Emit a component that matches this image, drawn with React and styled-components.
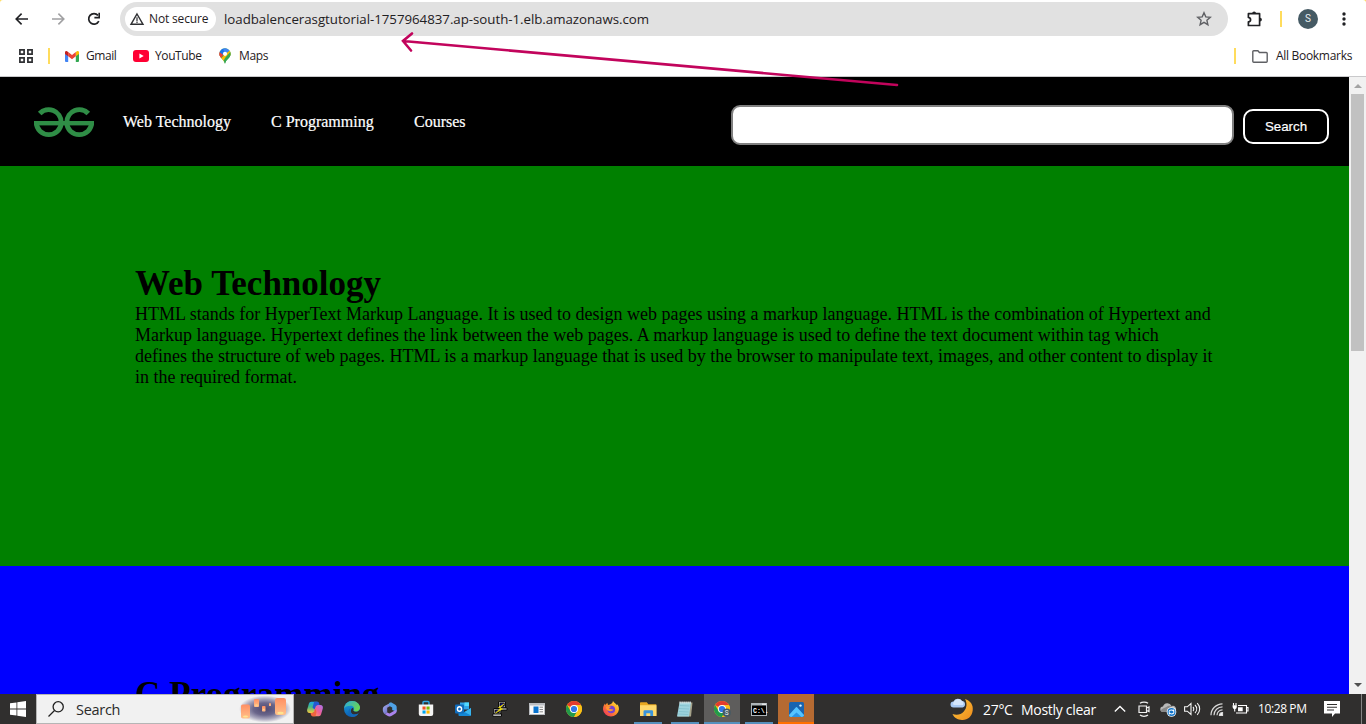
import React from 'react';
import styled, { createGlobalStyle } from 'styled-components';

const Global = createGlobalStyle`
  * { box-sizing: border-box; }
  html, body { margin: 0; padding: 0; overflow: hidden; }
  svg { display: block; flex: none; overflow: visible; }
`;

const Screen = styled.div`
  position: relative;
  width: 1366px;
  height: 724px;
  display: flex;
  flex-direction: column;
  overflow: hidden;
  background: #fff;
  font-family: 'Open Sans', 'Noto Sans', sans-serif;
`;

const Label = styled.span`
  flex: none;
  white-space: nowrap;
  font-size: ${(p) => p.$size || 12}px;
  font-weight: ${(p) => p.$weight || 400};
  letter-spacing: ${(p) => p.$track || 0}px;
  width: ${(p) => (p.$w ? `${p.$w}px` : 'auto')};
  padding-top: ${(p) => p.$drop || 0}px;
  margin-left: ${(p) => p.$ml || 0}px;
  color: ${(p) => p.$color || '#1f2023'};
  line-height: 18px;
`;

/* Browser chrome */
const ChromeFrame = styled.div`
  height: 77px;
  flex: none;
  background: #ffdc5c;
`;
const ChromeSurface = styled.div`
  height: 77px;
  background: #fff;
  border-bottom: 1px solid #c9c9cb;
  border-radius: 3px 3px 0 0;
`;
const Toolbar = styled.div`
  height: 38px;
  display: flex;
  align-items: center;
  padding-left: 4px;
`;
const ToolCell = styled.div`
  width: 36px;
  height: 34px;
  flex: none;
  display: flex;
  align-items: center;
  justify-content: center;
`;
const AddressBar = styled.div`
  width: 1108px;
  height: 34px;
  margin: 0 8px;
  padding: 0 16px 0 5px;
  border-radius: 17px;
  background: #e1e1e1;
  display: flex;
  align-items: center;
`;
const SecurityChip = styled.div`
  width: 91px;
  height: 24px;
  border-radius: 12px;
  background: #fff;
  display: flex;
  align-items: center;
  padding-left: 5px;
  gap: 5px;
  margin-right: 8px;
`;
const Spacer = styled.div`flex: 1;`;
const Divider = styled.div`
  width: 2px;
  height: 16px;
  flex: none;
  margin: ${(p) => p.$m || '0'};
  background: #ffdc5c;
`;
const Avatar = styled.div`
  width: 20px;
  height: 20px;
  border-radius: 50%;
  background: #455a64;
  color: #e8eef1;
  font: 10px/20px Roboto, sans-serif;
  text-align: center;
`;
const Bookmarks = styled.div`
  height: 36px;
  display: flex;
  align-items: center;
  padding: 0 14px 0 19px;
`;
const Bookmark = styled.div`
  display: flex;
  align-items: center;
  gap: ${(p) => p.$gap}px;
  width: ${(p) => p.$w}px;
`;

/* Web page */
const Viewport = styled.div`
  height: 617px;
  flex: none;
  display: flex;
`;
const Page = styled.main`
  width: 1349px;
  height: 617px;
  overflow: hidden;
  font-family: 'Liberation Serif', serif;
`;
const Nav = styled.nav`
  height: 89px;
  background: #000;
  display: flex;
  align-items: center;
  padding: 0 20px 0 34px;
`;
const NavLinks = styled.div`
  display: flex;
  gap: 40px;
  margin: 1px 0 0 29px;
`;
const NavLink = styled.a`
  color: #fff;
  font-size: 16px;
  line-height: 18px;
  width: ${(p) => p.$w}px;
  white-space: nowrap;
  -webkit-text-stroke: 0.2px #fff;
`;
const SearchInput = styled.div`
  width: 503px;
  height: 40px;
  margin: 7px 9px 0 0;
  background: #fff;
  border: 2px solid #808080;
  border-radius: 9px;
`;
const SearchButton = styled.button`
  width: 86px;
  height: 35px;
  margin: 10px 0 0;
  padding: 0;
  background: #000;
  color: #fff;
  border: 2px solid #fff;
  border-radius: 10px;
  font: 13.33px 'Liberation Sans', sans-serif;
  -webkit-text-stroke: 0.2px #fff;
`;
const Section = styled.section`
  height: 400px;
  background: ${(p) => p.$bg};
  padding: ${(p) => p.$top}px 135px 0;
`;
const Heading = styled.h1`
  margin: 0;
  font-size: 35px;
  line-height: 40px;
  letter-spacing: ${(p) => p.$track || 0}px;
  color: #000;
  white-space: nowrap;
`;
const Line = styled.span`
  display: block;
  white-space: nowrap;
`;
const Paragraph = styled.p`
  margin: 0;
  font-size: 18px;
  line-height: 21px;
  color: #000;
`;
const Scrollbar = styled.div`
  width: 17px;
  background: #f1f1f1;
  display: flex;
  flex-direction: column;
  align-items: center;
  padding: 7px 0;
`;
const Thumb = styled.div`
  width: 13px;
  height: 257px;
  margin: 6px 0 auto;
  background: #c1c1c1;
`;

/* Taskbar */
const Taskbar = styled.div`
  height: 30px;
  flex: none;
  display: flex;
  align-items: center;
  background: #302f2e;
`;
const SearchBox = styled.div`
  width: 258px;
  height: 30px;
  border: 1px solid #b5b5b5;
  background: #f1f1f1;
  display: flex;
  align-items: center;
  padding: 0 2px 0 11px;
`;
const Apps = styled.div`
  display: flex;
  gap: 1px;
  margin-left: 3px;
`;
const AppCell = styled.div`
  width: 36px;
  height: 30px;
  display: flex;
  align-items: center;
  justify-content: center;
  background: ${(p) => p.$bg || 'transparent'};
  background-image: ${(p) => (p.$line ? `linear-gradient(${p.$line}, ${p.$line})` : 'none')};
  background-size: ${(p) => (p.$full ? 36 : 28)}px 2px;
  background-position: center bottom;
  background-repeat: no-repeat;
`;
const Tray = styled.div`
  width: 416px;
  height: 30px;
  flex: none;
  margin-left: auto;
  display: flex;
  align-items: center;
`;
const TrayCell = styled.div`
  width: 24px;
  flex: none;
  display: flex;
  justify-content: center;
`;
const DesktopEdge = styled.div`
  width: 1px;
  height: 30px;
  flex: none;
  margin: 0 4px 0 auto;
  background: #858585;
`;
const Arrow = styled.svg`
  position: absolute;
  left: 0;
  top: 0;
  pointer-events: none;
`;

const Svg = ({ s = 16, w = s, h = s, vb = `0 0 ${w} ${h}`, children, ...rest }) => (
  <svg width={w} height={h} viewBox={vb} fill="none" {...rest}>{children}</svg>
);

const Back = ({ color = '#202124', flip }) => (
  <Svg s={16} stroke={color} strokeWidth="1.6">
    <path d={flip ? 'M2 8h11.5M8.4 2.6 13.8 8l-5.4 5.4' : 'M14 8H2.5M7.6 2.6 2.2 8l5.4 5.4'} />
  </Svg>
);
const Reload = () => (
  <Svg s={16}>
    <path d="M12.8 10.2A5.3 5.3 0 1 1 12 4.4" stroke="#202124" strokeWidth="1.7" />
    <path d="M14 1.8v5.6H8.4V5.8h4V1.8z" fill="#202124" />
  </Svg>
);
const Warning = () => (
  <Svg s={14}>
    <path d="M7 2 13 12.3H1z" stroke="#303134" strokeWidth="1.4" />
    <path d="M7 5.3v3.6M7 9.6v1.3" stroke="#303134" strokeWidth="1.2" />
  </Svg>
);
const Star = () => (
  <Svg s={16} stroke="#5f6064" strokeWidth="1.4">
    <path d="m8 1.8 1.8 4.1 4.5.4-3.4 3 1 4.4L8 11.4l-3.9 2.3 1-4.4-3.4-3 4.5-.4z" />
  </Svg>
);
const Puzzle = () => (
  <Svg s={18}>
    <path d="M3.6 3.7h11v11.8H3.400v-3.600c2.900-.6 2.900-3.900 0-4.500V3.700z" stroke="#202124" strokeWidth="1.7" strokeLinejoin="round" />
    <path d="M7.200 3.300a1.900 1.800 0 0 1 3.800 0zM15 7.700a1.900 1.900 0 0 1 0 3.800z" fill="#202124" />
  </Svg>
);
const Dots = () => (
  <Svg w={4} h={16}><g fill="#202124"><circle cx="2" cy="3" r="1.7" /><circle cx="2" cy="8" r="1.7" /><circle cx="2" cy="13" r="1.7" /></g></Svg>
);
const AppsGrid = () => (
  <Svg s={14} stroke="#303134" strokeWidth="1.7">
    <path d="M.9.9h4.2v4.2H.9zM8.9.9h4.2v4.2H8.9zM.9 8.9h4.2v4.2H.9zM8.9 8.9h4.2v4.2H8.9z" />
  </Svg>
);
const Gmail = () => (
  <Svg w={14} h={11}>
    <path d="M0 1.7 3.2 4v7H1a1 1 0 0 1-1-1z" fill="#4285f4" />
    <path d="M14 1.7 10.8 4v7H13a1 1 0 0 0 1-1z" fill="#34a853" />
    <path d="M10.8 1.1 12 .3c.9-.6 2 0 2 1.2v1.4l-3.2 2.4z" fill="#fbbc04" />
    <path d="M3.2 1.1 7 4l3.8-2.9v4.2L7 8.2 3.2 5.3z" fill="#ea4335" />
    <path d="M0 1.5C0 .3 1.1-.3 2 .3l1.2.8v4.2L0 2.9z" fill="#c5221f" />
  </Svg>
);
const YouTube = () => (
  <Svg w={16} h={12}><rect width="16" height="12" rx="3" fill="#ff0033" /><path d="m6.4 3.4 4.3 2.6-4.3 2.6z" fill="#fff" /></Svg>
);
const MapsPin = () => (
  <Svg w={12} h={16}>
    <defs><clipPath id="pin"><path d="M6 .3a5.600 5.600 0 0 1 5.600 5.600C11.600 9.800 7.500 10.500 6 15.700 4.500 10.500.4 9.800.4 5.900A5.600 5.600 0 0 1 6 .3z" /></clipPath></defs>
    <g clipPath="url(#pin)">
      <path d="M0 0h12v16H0z" fill="#34a853" />
      <path d="M0 12 12 1v6L4 16z" fill="#fbbc04" />
      <path d="m6 10 6-7v13H3z" fill="#34a853" />
      <path d="M0 10V3l6 3z" fill="#ea4335" />
      <path d="M1.500 2.500 6 6l5.500-4L8 0H3z" fill="#4285f4" />
      <path d="M0 0h4l1.500 5L4 7 0 4z" fill="#1a73e8" />
      <path d="m0 4 4 3-2.500 4L0 9z" fill="#ea4335" />
    </g>
    <circle cx="6" cy="5.800" r="2.100" fill="#fff" />
  </Svg>
);
const Folder = () => (
  <Svg w={16} h={13} stroke="#5f6064" strokeWidth="1.400"><path d="M1.700.8h4.200l1.500 1.700h6.900a.9.9 0 0 1 .9.9v7.900a.9.9 0 0 1-.9.9H1.700a.9.9 0 0 1-.9-.9V1.700a.9.9 0 0 1 .9-.9z" /></Svg>
);
const LogoHalf = () => (
  <g stroke="#2f8d46" strokeWidth="4.900">
    <path d="M54.300 6.500A12.400 12.400 0 0 0 32.900 15" />
    <path d="M30 16.200h30" strokeWidth="4.400" />
    <path d="M32.900 16a12.300 11.600 0 0 0 24.600 0" />
  </g>
);
const Logo = () => (
  <Svg w={60} h={30}><LogoHalf /><g transform="translate(60) scale(-1 1)"><LogoHalf /></g></Svg>
);

const Windows = () => (
  <Svg s={16}><path fill="#fff" d="M0 2.300 6.500 1.400v6.100H0zM7.300 1.300 16 0v7.500H7.300zM0 8.400h6.500v6.200L0 13.700zM7.300 8.400H16V16l-8.700-1.300z" /></Svg>
);
const Magnifier = () => (
  <Svg s={16} stroke="#202020" strokeWidth="1.300"><circle cx="10.200" cy="5.800" r="5.100" /><path d="m6.500 9.500-6 6" /></Svg>
);
const Lantern = ({ x, y, w, h }) => (
  <g><rect x={x} y={y} width={w} height={h} rx={w / 5} fill="url(#lamp)" /><ellipse cx={x + w / 2} cy={y + h - 2} rx={w / 3.500} ry={w / 9} fill="#ffe38f" /></g>
);
const Lanterns = () => (
  <Svg w={52} h={27}>
    <defs>
      <radialGradient id="dusk"><stop offset="0" stopColor="#4e4870" /><stop offset=".45" stopColor="#6a668b" /><stop offset=".75" stopColor="#aaa7bd" /><stop offset="1" stopColor="#f1f1f1" /></radialGradient>
      <linearGradient id="lamp" x1="0" y1="0" x2="0" y2="1"><stop stopColor="#ff8f63" /><stop offset="1" stopColor="#ffc08a" /></linearGradient>
    </defs>
    <ellipse cx="26" cy="13" rx="26" ry="13.500" fill="url(#dusk)" />
    <Lantern x={2} y={8.500} w={9} h={14} /><Lantern x={15} y={3} w={5} h={8} /><Lantern x={23} y={10} w={3.500} h={5.500} /><Lantern x={30} y={7} w={2} h={3} /><Lantern x={36} y={2} w={11} h={17} />
  </Svg>
);
const Copilot = () => (
  <Svg s={16}>
    <defs>
      <linearGradient id="cpA" x1="0" y1="0" x2="0" y2="1"><stop stopColor="#1aa5ef" /><stop offset=".45" stopColor="#46b985" /><stop offset="1" stopColor="#f9c93a" /></linearGradient>
      <linearGradient id="cpB" x1="1" y1="0" x2="0" y2="1"><stop stopColor="#a873f0" /><stop offset=".5" stopColor="#ee5f99" /><stop offset="1" stopColor="#ffa557" /></linearGradient>
    </defs>
    <path d="M4.300.8h6.200L7.700 9.800c-.5 1.600-1.200 2.200-2.500 2.200H2.500C.7 12-.3 10.500.2 8.600l1.700-5.800C2.300 1.500 3 .8 4.300.8z" fill="url(#cpA)" />
    <path d="M11.700 15.200H5.500L8.300 6.200C8.800 4.600 9.500 4 10.800 4h2.700c1.800 0 2.800 1.500 2.300 3.400l-1.700 5.800c-.4 1.300-1.100 2-2.400 2z" fill="url(#cpB)" />
    <path d="M7.200.8h3.300c1.200 0 1.700 1.200 2.100 3.200h-1.500c-1.500 0-2.300.7-2.800 2.200L7.500 8.500 5.500 6.500z" fill="#2458d3" />
    <path d="M8.500 15.200H5.500c-1.200 0-1.700-1.200-2-3.200h1.700c1.300 0 2-.6 2.500-2.200l.8-2.300 1 3.500z" fill="#f0643e" />
  </Svg>
);
const Edge = () => (
  <Svg s={16}>
    <defs>
      <linearGradient id="edA" x1="0" y1="0" x2="1" y2=".5"><stop stopColor="#2aa9df" /><stop offset="1" stopColor="#6ad653" /></linearGradient>
      <linearGradient id="edB" x1="0" y1="0" x2="0" y2="1"><stop stopColor="#1aa5dc" /><stop offset="1" stopColor="#0b5db5" /></linearGradient>
    </defs>
    <circle cx="8" cy="8" r="8" fill="url(#edB)" />
    <path d="M9.500 9c-.5.8.5 1.600 2.300 1.600 1.700 0 3.300-.6 4.200-2.600v2.500l-1.500 2.500c-1.200.7-2.400 1-3.900 1C6 13.800 6 7 9.100 6.700z" fill="#302f2e" />
    <path d="M.1 7.500C.6 3 4 0 8 0c5 0 8 3.500 8 6.500 0 2.300-1.700 4-4 4-1.900 0-2.800-.8-2.300-1.500 1.100-1.500.1-4.300-3-4.300C3 4.700.8 6 .1 7.500z" fill="url(#edA)" />
    <path d="M6.500 7C4.700 9.500 7 13.300 10.500 13.300c1.600 0 3-.4 4.200-1C13.400 14.600 11 16 8.300 16 4.500 15.500 3 9 6.500 7z" fill="#1368b8" />
  </Svg>
);
const M365 = () => (
  <Svg s={15}>
    <defs><linearGradient id="m3" x1="0" y1="0" x2="1" y2="1"><stop stopColor="#a8b5ef" /><stop offset="1" stopColor="#5b57bd" /></linearGradient></defs>
    <path d="M8.500.8 3 3.800C1.400 4.700.8 5.800.8 7.500s.4 3.700 2.200 4.700l2.200-1.600V5.800L10 3z" fill="url(#m3)" />
    <path d="M7.200 1C8.400.3 9.300.5 10.300 1l3 1.800c1 .6 1.400 1.500 1.400 2.700v4.200L10.200 8V5.600L7 3.800z" fill="#4fa2e6" />
    <path d="M14.600 8.800c0 1.600-.5 2.400-1.600 3l-3.200 2c-1.400.9-3 .9-4.400 0L3 12.200l2.200-1.600 2.300 1 7.100-4.100z" fill="#a983ec" />
  </Svg>
);
const Store = () => (
  <Svg s={16}>
    <path d="M5 4.500V1.500a1 1 0 0 1 1-1h4a1 1 0 0 1 1 1v3" stroke="#30a8e8" strokeWidth="1.400" />
    <path d="M.8 3.500h14.400V13a2 2 0 0 1-2 2H2.800a2 2 0 0 1-2-2z" fill="#f4f4f4" />
    <path d="M4.500 5.500h3.100v3.100H4.500z" fill="#f25022" /><path d="M8.500 5.500h3.100v3.100H8.500z" fill="#7fba00" /><path d="M4.500 9.500h3.100v3.100H4.500z" fill="#00a4ef" /><path d="M8.500 9.500h3.100v3.100H8.500z" fill="#ffb900" />
  </Svg>
);
const Outlook = () => (
  <Svg s={16}>
    <path d="M5 1.500h9v7H5z" fill="#31a6ea" /><path d="M9.500 1.500H14V5H9.500z" fill="#50d9ff" />
    <path d="m3.500 7.500 6 3.500L16 7v7.200a.8.8 0 0 1-.8.8H4.300a.8.8 0 0 1-.8-.8z" fill="#1488d5" /><path d="M16 7v7.500L9.500 11z" fill="#38b5ee" />
    <rect y="3.500" width="9" height="9" rx="1" fill="#0f6cbd" /><ellipse cx="4.500" cy="8" rx="2.100" ry="2.300" stroke="#fff" strokeWidth="1.400" />
  </Svg>
);
const Putty = () => (
  <Svg s={16} stroke="#000" strokeWidth=".9">
    <path d="M6.500.8h7v6h-7z" fill="#d0d0d0" /><path d="M8 2.200h4.200v3H8z" fill="#1111a0" /><path d="M6.500 7H15v2H6.500z" fill="#d9d9d9" />
    <path d="M1.800 7.500h7v5.500h-7z" fill="#d0d0d0" /><path d="M3.300 9h4v2.500h-4z" fill="#1111a0" /><path d="M.8 13h8.700v2.300H.8z" fill="#d9d9d9" />
    <path d="M12 3 6.500 6.500l2.200.8L3.500 12l7-4-2.500-1z" fill="#ffee22" stroke="#e2d400" strokeWidth=".7" />
  </Svg>
);
const AppWindow = () => (
  <Svg w={16} h={12}><path d="M0 0h16v12H0z" fill="#b9bcc0" /><path d="M1 2.500h14V11H1z" fill="#fafafa" /><path d="M4.500 3.500h5V10h-5z" fill="#0873ce" /><path d="M10.500 4.200H14M10.500 6.500H14M10.500 8.800H14" stroke="#888" /></Svg>
);
const Chrome = ({ badge }) => (
  <Svg s={16}>
    <circle cx="8" cy="8" r="8" fill="#fbc116" />
    <path d="M8 8 1.070 4A8 8 0 0 1 14.930 4H8z" fill="#e33b2e" />
    <path d="M1.070 4A8 8 0 0 0 8 16l3.460-6L8 8l-3.460 2z" fill="#229a4a" />
    <path d="M14.930 4H8v4l3.460 2L8 16a8 8 0 0 0 6.930-12z" fill="#fbc116" />
    <circle cx="8" cy="8" r="4" fill="#fff" /><circle cx="8" cy="8" r="3.100" fill="#3077e8" />
    {badge && <g><circle cx="12.700" cy="11.700" r="4.100" fill="#455a64" /><text x="12.700" y="14" fontSize="6.500" fill="#e9eff2" textAnchor="middle" fontFamily="Roboto">S</text></g>}
  </Svg>
);
const Firefox = () => (
  <Svg s={16}>
    <defs><linearGradient id="ff" x1="1" y1="0" x2="0" y2="1"><stop stopColor="#fff13d" /><stop offset=".45" stopColor="#ff9626" /><stop offset="1" stopColor="#ed2066" /></linearGradient></defs>
    <path d="M10 0c1 2 3.200 2.700 4 4.300.3-.3.300-.8.200-1.200C15.700 5 16 7 15.900 8.500A8 8 0 0 1 0 8.400c0-2.500.8-4.500 2-5.900 0 .7.200 1.100.5 1.500C3 3.100 3.600 2.300 4.500 1.700c-.1.900.1 1.600.8 2.200C7.500 3.700 9.500 2.500 10 0z" fill="url(#ff)" />
    <circle cx="8.300" cy="8.500" r="3.800" fill="#7542d0" />
    <path d="M3 6c1.700-1 3.500-.8 5.300 0-1 .2-2.300 1-2.300 2.200 2-.4 3 .6 4.500.3-1 2.200-6 2.500-7.300-1z" fill="#ff9830" />
  </Svg>
);
const Explorer = () => (
  <Svg w={17} h={14}><path d="M0 1a.8.8 0 0 1 .8-.8h6l1.500 2h8V14H0z" fill="#e8a820" /><path d="M0 3.200h16.500V14H0z" fill="#ffd96b" /><path d="M3.500 14V9.500a1.200 1.200 0 0 1 1.200-1.200h7.200a1.200 1.200 0 0 1 1.200 1.200V14h-2.800v-2.700H6.300V14z" fill="#3a94dc" /></Svg>
);
const Notepad = () => (
  <Svg w={16} h={16}><path d="M3 1.500h12.500L14 15.500H1z" fill="#a5a28a" /><path d="M2.500 1.500H14l-2 14H0z" fill="#9ed3dd" /><path d="m2.500 4.500 10 .5M2 7.500l10 .5M1.600 10.500l10 .5M1.300 13l10 .5" stroke="#82bfcb" strokeWidth=".8" /><path d="M2.500 1.500H14" stroke="#e7eef0" strokeWidth="2" strokeDasharray="1.200 .8" /></Svg>
);
const Terminal = () => (
  <Svg w={16} h={13}><path d="M0 0h16v13H0z" fill="#aeb5b9" /><path d="M1 2.500h14V12H1z" fill="#000" /><path d="M11 1.200h4" stroke="#fff" /><text x="2" y="9.500" fontSize="6.500" fontWeight="700" fill="#fff" fontFamily="Liberation Mono">C:\.</text></Svg>
);
const Photos = () => (
  <Svg s={15}><rect width="15" height="15" rx="1.500" fill="#1864b0" /><path d="M0 13 6.500 5.700a1.300 1.300 0 0 1 2 0L15 13c0 1.200-.7 2-2 2H2c-1.300 0-2-.8-2-2z" fill="#55c4ff" /><path d="m2.500 15 5-4.500 5 4.500z" fill="#2995e5" /><circle cx="11.500" cy="3.600" r="1.200" fill="#d9f3ff" /></Svg>
);
const Moon = () => (
  <Svg w={24} h={23}>
    <defs><linearGradient id="moon" x1="0" y1="0" x2="1" y2="1"><stop stopColor="#ffc83c" /><stop offset="1" stopColor="#ef8c1c" /></linearGradient></defs>
    <path d="M15 1c5.500 1.700 8.500 6 7.700 11.500C22 18.600 17.500 22.300 12 22 7.500 21.800 4 19.500 2.500 16c4 1.300 8.500.8 11.300-2.500C17 10 17.300 5 15 1z" fill="url(#moon)" />
    <path d="M3.500 9.500a3 3 0 0 1 0-6A4.800 4.800 0 0 1 12 3a3.300 3.300 0 0 1 .5 6.500z" fill="#a9c9f3" /><path d="M3.500 7A2.700 2.700 0 0 1 4 3.500 4.600 4.600 0 0 1 12 3a3 3 0 0 1 1 4z" fill="#d4e5fb" />
  </Svg>
);
const Chevron = () => <Svg w={12} h={8} stroke="#fff" strokeWidth="1.300"><path d="m.8 6.500 5.200-5 5.200 5" /></Svg>;
const Meet = () => <Svg w={12} h={16} stroke="#f1f1f1" strokeWidth="1.200"><path d="M1 5h7.500v6.500H1zM8.500 7l2.500-1v4.500L8.500 9.500M2 2.300c2-1.700 6-1.700 8 0M2 14c2 1.700 6 1.700 8 0" /></Svg>;
const CloudSync = () => (
  <Svg w={16} h={15}><path d="M3 10a2.700 2.700 0 0 1 0-5.400A4.500 4.500 0 0 1 11.500 4 3 3 0 0 1 14 10z" fill="#b8b8b8" /><path d="M1 8c2-2 4-2 7-4 2-.7 4-.5 5 1.500v4.500H3C1.700 10 1 9 1 8z" fill="#888" /><circle cx="11.500" cy="10" r="4.800" fill="#fff" /><circle cx="11.500" cy="10" r="4" fill="#1174ca" /><path d="M9 9.500c.8-2 3.500-2 4.700-.3V7.500M14 10.500c-.8 2-3.500 2-4.700.3v1.700" stroke="#fff" strokeWidth="1.100" /></Svg>
);
const Speaker = () => <Svg w={17} h={14} stroke="#f5f5f5" strokeWidth="1.100"><path d="M.6 4.800h2.700L7 1.500v11L3.300 9.200H.6zM9 5c1 1 1 3 0 4M11 3c2.200 2.300 2.200 5.700 0 8M13.200 1.200c3.300 3.300 3.300 8.300 0 11.600" /></Svg>;
const Wifi = () => <Svg w={13} h={14} stroke="#d9d9d9" strokeWidth="1.200"><path d="M1 13.300C1 7 6 2 12.500 1.800M4 13.300c0-4.700 3.800-8.500 8.500-8.500M7 13.300c0-3 2.400-5.500 5.500-5.500" /><path d="M9.500 13.300a3 3 0 0 1 3-2.800v2.800z" fill="#fff" /></Svg>;
const Battery = () => <Svg w={17} h={12}><path d="M6 2.500h8.500V10H4M14.500 4.500h1.500V8h-1.500M1.500 0v2.500M4 0v2.500M2.700 5v3.500" stroke="#fff" strokeWidth="1.100" /><path d="M.6 2.300h4.200v1.800a2.100 2.100 0 0 1-4.200 0zM6 4.300h4.700v4H6z" fill="#fff" /></Svg>;
const Notice = () => <Svg w={16} h={16}><path d="M0 0h16v12.500h-5L8 16v-3.500H0z" fill="#fff" /><path d="M3 3.500h10M3 6.200h10M3 9h7" stroke="#302f2e" strokeWidth="1.100" /></Svg>;

const apps = [
  { icon: <Copilot /> }, { icon: <Edge /> }, { icon: <M365 /> }, { icon: <Store /> }, { icon: <Outlook /> },
  { icon: <Putty /> }, { icon: <AppWindow /> }, { icon: <Chrome /> }, { icon: <Firefox /> },
  { icon: <Explorer />, line: '#5590bd' }, { icon: <Notepad />, line: '#5590bd' },
  { icon: <Chrome badge />, bg: '#5e5d5c', line: '#5590bd', full: true },
  { icon: <Terminal />, line: '#5590bd' }, { icon: <Photos />, bg: '#b56a32', line: '#ff7000', full: true },
];
const paragraph = [
  'HTML stands for HyperText Markup Language. It is used to design web pages using a markup language. HTML is the combination of Hypertext and',
  'Markup language. Hypertext defines the link between the web pages. A markup language is used to define the text document within tag which',
  'defines the structure of web pages. HTML is a markup language that is used by the browser to manipulate text, images, and other content to display it',
  'in the required format.',
];

export default function App() {
  return (
    <Screen>
      <Global />
      <ChromeFrame><ChromeSurface>
        <Toolbar>
          <ToolCell><Back /></ToolCell>
          <ToolCell><Back flip color="#a0a0a2" /></ToolCell>
          <ToolCell><Reload /></ToolCell>
          <AddressBar>
            <SecurityChip><Warning /><Label $size={12} $weight={500} $track={-0.15}>Not secure</Label></SecurityChip>
            <Label $size={13.3} $track={-0.035}>loadbalencerasgtutorial-1757964837.ap-south-1.elb.amazonaws.com</Label>
            <Spacer /><Star />
          </AddressBar>
          <ToolCell><Puzzle /></ToolCell>
          <Divider $m="0 8px" />
          <ToolCell><Avatar>S</Avatar></ToolCell>
          <ToolCell><Dots /></ToolCell>
        </Toolbar>
        <Bookmarks>
          <AppsGrid />
          <Divider $m="0 15px" />
          <Bookmark $w={68} $gap={7}><Gmail /><Label $track={-0.45}>Gmail</Label></Bookmark>
          <Bookmark $w={86} $gap={6}><YouTube /><Label $track={-0.4}>YouTube</Label></Bookmark>
          <Bookmark $w={60} $gap={8}><MapsPin /><Label $track={-0.35}>Maps</Label></Bookmark>
          <Spacer />
          <Divider $m="0 16px 0 0" />
          <Folder />
          <Label $w={76} $ml={8} $track={-0.3}>All Bookmarks</Label>
        </Bookmarks>
      </ChromeSurface></ChromeFrame>
      <Viewport>
        <Page>
          <Nav>
            <Logo />
            <NavLinks>
              <NavLink $w={108}>Web Technology</NavLink>
              <NavLink $w={103}>C Programming</NavLink>
              <NavLink $w={52}>Courses</NavLink>
            </NavLinks>
            <Spacer />
            <SearchInput />
            <SearchButton>Search</SearchButton>
          </Nav>
          <Section $bg="#008000" $top={98}>
            <Heading>Web Technology</Heading>
            <Paragraph>{paragraph.map((t) => <Line key={t}>{t}</Line>)}</Paragraph>
          </Section>
          <Section $bg="#0000ff" $top={109}>
            <Heading $track={0.1}>C Programming</Heading>
          </Section>
        </Page>
        <Scrollbar>
          <Svg w={8} h={4}><path d="M4 0 8 4H0z" fill="#a3a3a3" /></Svg>
          <Thumb />
          <Svg w={8} h={4}><path d="M0 0h8L4 4z" fill="#505050" /></Svg>
        </Scrollbar>
      </Viewport>
      <Taskbar>
        <ToolCell><Windows /></ToolCell>
        <SearchBox><Magnifier /><Label $size={14.5} $ml={12} $drop={2} $color="#2b2b2b" $track={-0.3}>Search</Label><Spacer /><Lanterns /></SearchBox>
        <Apps>{apps.map((a, i) => <AppCell key={i} $bg={a.bg} $line={a.line} $full={a.full}>{a.icon}</AppCell>)}</Apps>
        <Tray>
          <Moon />
          <Label $size={14} $w={38} $ml={9} $drop={1} $color="#fff" $track={-0.3}>27°C</Label>
          <Label $size={14} $w={87} $drop={1} $color="#fff" $track={-0.3}>Mostly clear</Label>
          <TrayCell><Chevron /></TrayCell><TrayCell><Meet /></TrayCell><TrayCell><CloudSync /></TrayCell>
          <TrayCell><Speaker /></TrayCell><TrayCell><Wifi /></TrayCell><TrayCell><Battery /></TrayCell>
          <Label $size={12} $w={66} $ml={6} $color="#fff" $track={-0.4}>10:28 PM</Label>
          <Notice />
          <DesktopEdge />
        </Tray>
      </Taskbar>
      <Arrow width="1366" height="100" fill="none" stroke="#c2045c" strokeWidth="2.600" strokeLinecap="round">
        <path d="M403 41 897 85M412 33.500l-9 7.500 8 9.500" />
      </Arrow>
    </Screen>
  );
}
